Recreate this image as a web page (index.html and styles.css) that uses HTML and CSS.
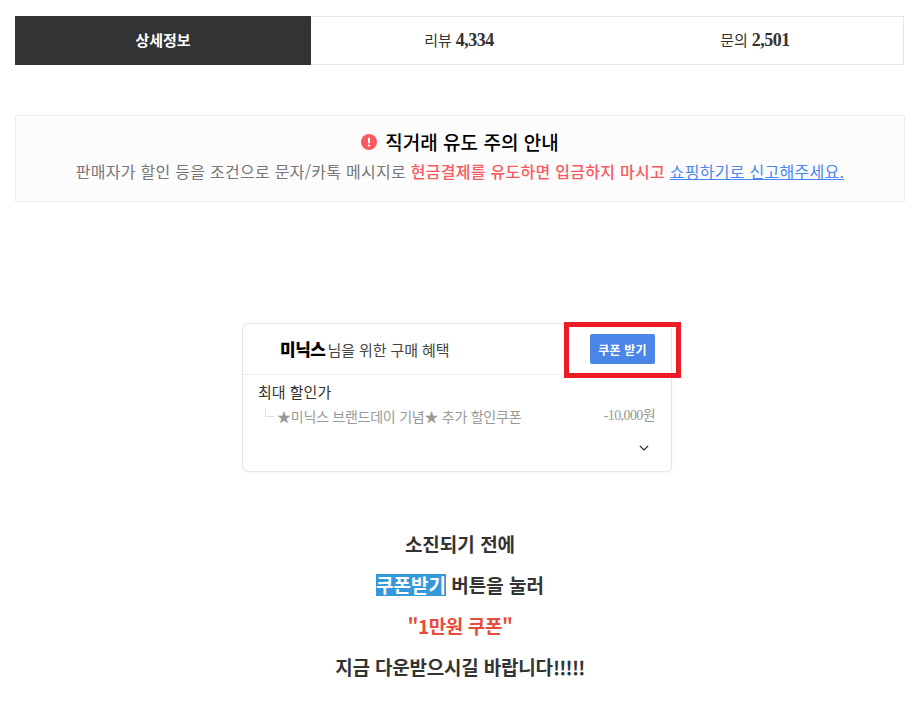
FILE: index.html
```html
<!DOCTYPE html>
<html lang="ko">
<head>
<meta charset="utf-8">
<title>상세정보</title>
<link rel="stylesheet" href="styles.css">
</head>
<body>
<div class="page">
  <nav class="tabs">
    <div class="tab tab-active">상세정보</div>
    <div class="tab">리뷰 <b>4,334</b></div>
    <div class="tab">문의 <b>2,501</b></div>
  </nav>
  <section class="notice">
    <h2 class="notice-title">
      <svg class="notice-icon" width="16" height="16" viewBox="0 0 16 16"><circle cx="8" cy="8" r="8" fill="#fa5a5f"/><rect x="7" y="3.5" width="2" height="6" rx="1" fill="#fff"/><circle cx="8" cy="11.6" r="1.15" fill="#fff"/></svg>
      <span>직거래 유도 주의 안내</span>
    </h2>
    <p class="notice-text">판매자가 할인 등을 조건으로 문자/카톡 메시지로 <strong class="warn">현금결제를 유도하면 입금하지 마시고</strong> <a class="report" href="#">쇼핑하기로 신고해주세요.</a></p>
  </section>
  <section class="card">
    <header class="card-head">
      <div class="card-title"><b class="brand">미닉스</b> 님을 위한 구매 혜택</div>
      <button class="coupon-btn" type="button">쿠폰 받기</button>
      <div class="highlight"></div>
    </header>
    <div class="card-body">
      <div class="max-label">최대 할인가</div>
      <div class="coupon-row">
        <span class="elbow"></span>
        <span class="coupon-name">★미닉스 브랜드데이 기념★ 추가 할인쿠폰</span>
        <span class="coupon-price">-10,000원</span>
      </div>
      <div class="chevron-row">
        <svg width="10" height="6" viewBox="0 0 10 6"><path d="M.8.8 5 5 9.2.8" fill="none" stroke="#222" stroke-width="1.2"/></svg>
      </div>
    </div>
  </section>
  <section class="message">
    <p>소진되기 전에</p>
    <p><span class="mark">쿠폰받기</span> 버튼을 눌러</p>
    <p class="red">"1만원 쿠폰"</p>
    <p class="last">지금 다운받으시길 바랍니다<span class="bang">!!!!!</span></p>
  </section>
</div>
</body>
</html>
```
FILE: styles.css
```css
* { box-sizing: border-box; }
html, body { margin: 0; padding: 0; background: #fff; }
body { font-family: "Liberation Serif", "Noto Sans CJK KR", serif; color: #333; }
.page { width: 920px; height: 720px; padding: 16px 15px 0; overflow: hidden; }
.tabs { display: flex; width: 889px; height: 49px; border: 1px solid #e5e5e5; border-left: 0; }
.tab { flex: 1; display: flex; align-items: center; justify-content: center; gap: 4px; padding-bottom: 2px; font-size: 15px; color: #333; }
.tab b { font-size: 18px; letter-spacing: -0.5px; padding-top: 2px; }
.tab-active { flex: 0 0 296px; margin: -1px 0; background: #333; color: #fff; font-weight: 700; }
.notice { width: 890px; height: 87px; margin-top: 50px; padding-top: 14px; background: #fcfcfc; border: 1px solid #eee; text-align: center; }
.notice-title { display: flex; align-items: center; justify-content: center; gap: 8px; margin: 0; font: 500 19px/24px "Noto Sans CJK KR", sans-serif; color: #000; }
.notice-text { margin: 6px 0 0; font: 400 16px/22px "Noto Sans CJK KR", sans-serif; letter-spacing: 0.28px; color: #777; }
.warn { font-weight: 500; color: #fa5a5f; }
.report { color: #4a86f0; }
.card { width: 430px; height: 149px; margin: 121px 0 0 227px; background: #fff; border: 1px solid #e5e5e5; border-radius: 6px; box-shadow: 0 1px 3px rgba(0,0,0,.05); }
.card-head { position: relative; display: flex; align-items: center; justify-content: space-between; height: 51px; padding: 0 16px 0 37px; border-bottom: 1px solid #eee; }
.card-title { font: 400 15px/20px "Noto Sans CJK KR", sans-serif; letter-spacing: -0.1px; color: #444; }
.brand { margin-right: -2px; font-size: 17px; font-weight: 900; color: #000; letter-spacing: -0.5px; }
.coupon-btn { width: 65px; height: 30px; padding: 0; border: 0; border-radius: 2px; background: #4a86e8; color: #fff; font: 700 12px "Noto Sans CJK KR", sans-serif; letter-spacing: 0.2px; }
.highlight { position: absolute; left: 321px; top: -2px; width: 117px; height: 56px; border: 5px solid #ed1c24; pointer-events: none; }
.card-body { padding: 7px 16px 0 15px; }
.max-label { font: 400 15px/20px "Noto Sans CJK KR", sans-serif; color: #333; }
.coupon-row { display: flex; align-items: center; height: 20px; margin-top: 4px; font: 400 14px/20px "Liberation Serif", "Noto Sans CJK KR", sans-serif; color: #999; }
.elbow { width: 9px; height: 8px; margin: -6px 3px 0 7px; border-left: 1px solid #ddd; border-bottom: 1px solid #ddd; }
.coupon-name { flex: 1; font-family: "Noto Sans CJK KR", sans-serif; font-size: 14px; letter-spacing: -0.25px; }
.coupon-price { letter-spacing: -0.6px; }
.chevron-row { display: flex; justify-content: flex-end; padding: 19px 6px 0 0; line-height: 0; }
.message { margin-top: 59px; text-align: center; font: 700 19px/26px "Noto Sans CJK KR", sans-serif; color: #333; }
.message p { margin: 0 0 15px; }
.message .mark { display: inline-block; line-height: 22px; background: #3498db; color: #fff; }
.message .red { color: #e74c3c; letter-spacing: -0.4px; }
.message .last { letter-spacing: -0.2px; }
.message .bang { letter-spacing: -0.7px; }
```
